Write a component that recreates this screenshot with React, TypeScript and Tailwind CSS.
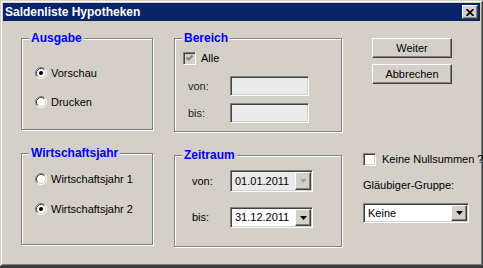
import React from "react"

const sunken =
  "border border-t-[#808080] border-l-[#808080] border-b-white border-r-white shadow-[inset_1px_1px_0_#404040,inset_-1px_-1px_0_#d4d0c8]"
const raised =
  "border border-t-white border-l-white border-b-[#404040] border-r-[#404040] shadow-[inset_-1px_-1px_0_#808080,inset_1px_1px_0_#d4d0c8]"

function Radio({ checked }: { checked?: boolean }) {
  return (
    <svg width="12" height="12" viewBox="0 0 12 12" className="shrink-0">
      <circle cx="6" cy="6" r="5" fill="#fff" />
      <path d="M2.11 9.89 A5.5 5.5 0 0 1 9.89 2.11" fill="none" stroke="#808080" strokeWidth="1" />
      <path d="M9.89 2.11 A5.5 5.5 0 0 1 2.11 9.89" fill="none" stroke="#ffffff" strokeWidth="1" />
      <path d="M2.82 9.18 A4.5 4.5 0 0 1 9.18 2.82" fill="none" stroke="#404040" strokeWidth="1" />
      <path d="M9.18 2.82 A4.5 4.5 0 0 1 2.82 9.18" fill="none" stroke="#d4d0c8" strokeWidth="1" />
      {checked && <circle cx="6" cy="6" r="2" fill="#000" />}
    </svg>
  )
}

function Check({ checked, disabled }: { checked?: boolean; disabled?: boolean }) {
  return (
    <div className={`w-[13px] h-[13px] shrink-0 ${sunken} ${disabled ? "bg-[#d4d0c8]" : "bg-white"} flex items-center justify-center`}>
      {checked && (
        <svg width="9" height="9" viewBox="0 0 9 9">
          <path d="M1.5 3.5 L3.5 5.5 L7.5 1.5" fill="none" stroke={disabled ? "#808080" : "#000"} strokeWidth="2" />
        </svg>
      )}
    </div>
  )
}

function Group({ title, className, children }: { title: string; className?: string; children?: React.ReactNode }) {
  return (
    <div className={`relative border border-[#808080] shadow-[inset_1px_1px_0_#fff,1px_1px_0_#fff] ${className ?? ""}`}>
      <span className="absolute left-[7px] -top-[8px] px-[2px] bg-[#d4d0c8] text-[#0000ff] font-bold text-[12px] leading-[14px] whitespace-nowrap">
        {title}
      </span>
      {children}
    </div>
  )
}

function Arrow({ disabled }: { disabled?: boolean }) {
  return (
    <div className={`w-[16px] h-full shrink-0 bg-[#d4d0c8] ${raised} flex items-center justify-center`}>
      <svg width="7" height="4" viewBox="0 0 7 4">
        <path d="M0 0 H7 L3.5 4 Z" fill={disabled ? "#a0a0a0" : "#000"} />
      </svg>
    </div>
  )
}

function Combo({ value, disabled, className }: { value: string; disabled?: boolean; className?: string }) {
  return (
    <div className={`${sunken} ${disabled ? "bg-[#ebebeb]" : "bg-white"} flex items-stretch p-[1px] ${className ?? ""}`}>
      <span className="flex-1 pl-[3px] flex items-center text-black whitespace-nowrap overflow-hidden">{value}</span>
      <Arrow disabled={disabled} />
    </div>
  )
}

export default function App() {
  return (
    <div className="w-[483px] h-[268px] bg-[#3a3a3a]" style={{ fontFamily: '"Liberation Sans", Arial, sans-serif' }}>
      <div className="w-[483px] h-[266px] bg-[#d4d0c8] p-[3px] flex flex-col shadow-[inset_1px_1px_0_#d4d0c8,inset_-1px_-1px_0_#404040,inset_2px_2px_0_#fff,inset_-2px_-2px_0_#808080]">
        {/* title bar */}
        <div className="h-[18px] bg-[#0a246a] flex items-center justify-between pl-[2px] pr-[2px]">
          <span className="text-white font-bold text-[12px] leading-none">Saldenliste Hypotheken</span>
          <div className={`w-[16px] h-[14px] bg-[#d4d0c8] ${raised} flex items-center justify-center`}>
            <svg width="8" height="7" viewBox="0 0 8 7">
              <path d="M0.5 0 L7.5 7 M7.5 0 L0.5 7" stroke="#000" strokeWidth="1.6" />
            </svg>
          </div>
        </div>

        <div className="flex pt-[17px] pl-[18px] text-[11px] text-black">
          {/* left column */}
          <div className="w-[132px] shrink-0 flex flex-col gap-[23px]">
            <Group title="Ausgabe" className="h-[92px] pt-[26px] pl-[13px]">
              <div className="flex flex-col gap-[13px]">
                <div className="h-[16px] flex items-center gap-[4px]">
                  <Radio checked />
                  <span>Vorschau</span>
                </div>
                <div className="h-[16px] flex items-center gap-[4px]">
                  <Radio />
                  <span>Drucken</span>
                </div>
              </div>
            </Group>
            <Group title="Wirtschaftsjahr" className="h-[92px] pt-[17px] pl-[13px]">
              <div className="flex flex-col gap-[14px]">
                <div className="h-[16px] flex items-center gap-[4px]">
                  <Radio />
                  <span>Wirtschaftsjahr 1</span>
                </div>
                <div className="h-[16px] flex items-center gap-[4px]">
                  <Radio checked />
                  <span>Wirtschaftsjahr 2</span>
                </div>
              </div>
            </Group>
          </div>

          {/* middle column */}
          <div className="ml-[21px] w-[168px] shrink-0 flex flex-col gap-[23px]">
            <Group title="Bereich" className="h-[94px] pt-[11px] pl-[8px]">
              <div className="h-[16px] flex items-center gap-[5px]">
                <Check checked disabled />
                <span>Alle</span>
              </div>
              <div className="mt-[10px] flex items-center">
                <span className="w-[47px] pl-[5px] text-[#222]">von:</span>
                <div className={`w-[79px] h-[20px] ${sunken} bg-[#ebebeb]`} />
              </div>
              <div className="mt-[7px] flex items-center">
                <span className="w-[47px] pl-[5px] text-[#222]">bis:</span>
                <div className={`w-[79px] h-[20px] ${sunken} bg-[#ebebeb]`} />
              </div>
            </Group>
            <Group title="Zeitraum" className="h-[92px] pt-[14px] pl-[9px]">
              <div className="flex items-center">
                <span className="w-[46px] pl-[8px]">von:</span>
                <Combo value="01.01.2011" disabled className="w-[83px] h-[22px]" />
              </div>
              <div className="mt-[15px] flex items-center">
                <span className="w-[46px] pl-[8px]">bis:</span>
                <Combo value="31.12.2011" className="w-[83px] h-[21px]" />
              </div>
            </Group>
          </div>

          {/* right column */}
          <div className="ml-[21px] w-[114px] shrink-0 flex flex-col">
            <div className={`ml-[9px] w-[80px] h-[20px] bg-[#d4d0c8] ${raised} flex items-center justify-center`}>
              Weiter
            </div>
            <div className={`ml-[9px] mt-[6px] w-[80px] h-[20px] bg-[#d4d0c8] ${raised} flex items-center justify-center`}>
              Abbrechen
            </div>
            <div className="mt-[67px] h-[16px] flex items-center gap-[6px] whitespace-nowrap">
              <Check />
              <span>Keine Nullsummen ?</span>
            </div>
            <div className="mt-[11px] h-[14px] flex items-center whitespace-nowrap">Gläubiger-Gruppe:</div>
            <Combo value="Keine" className="mt-[11px] w-[106px] h-[20px]" />
          </div>
        </div>
      </div>
    </div>
  )
}
